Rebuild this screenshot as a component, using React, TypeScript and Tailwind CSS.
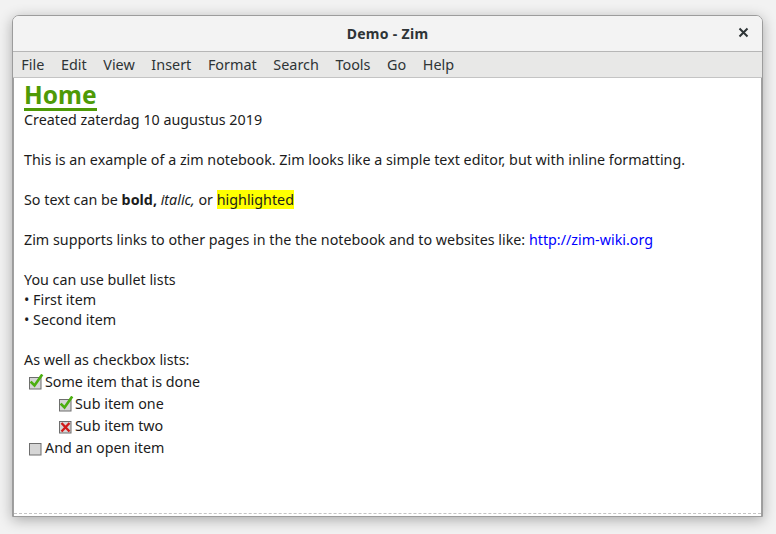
import React from 'react';

const MENU = ['File', 'Edit', 'View', 'Insert', 'Format', 'Search', 'Tools', 'Go', 'Help'];

type BoxState = 'done' | 'cross' | 'open';

// Checkbox icon as drawn by Zim's GTK theme
function CheckIcon({ state }: { state: BoxState }) {
  return (
    <svg width="16" height="16" viewBox="0 0 16 16" className="shrink-0">
      <rect x="1.5" y="3.5" width="11.5" height="11.5" fill="#d6d6d6" stroke="#6e6e6e" />
      {state === 'done' && (
        <path d="M3.5 8.5 L6.5 11.5 L13.5 1.5" fill="none" stroke="#4caf10" strokeWidth="2.6" strokeLinecap="square" />
      )}
      {state === 'cross' && (
        <path d="M3.5 5 L11.5 13.5 M11.5 5 L3.5 13.5" fill="none" stroke="#d11a1a" strokeWidth="2.4" />
      )}
    </svg>
  );
}

function CheckItem({ state, indent, children }: { state: BoxState; indent?: boolean; children: React.ReactNode }) {
  return (
    <div className={`flex items-center h-[22px] gap-[1px] ${indent ? 'pl-[34px]' : 'pl-[4px]'}`}>
      <CheckIcon state={state} />
      <span>{children}</span>
    </div>
  );
}

export default function App() {
  return (
    <div
      className="w-[776px] h-[534px] bg-[#f2f2f2] pt-[15px] pl-[12px]"
      style={{ fontFamily: "'Noto Sans', 'Open Sans', sans-serif" }}
    >
      <div className="w-[751px] h-[502px] flex flex-col rounded-t-[7px] border border-[#9c9c9c] shadow-[0_3px_14px_rgba(0,0,0,0.3)] overflow-hidden bg-white">
        {/* Title bar */}
        <div className="relative h-[36px] shrink-0 bg-[#f3f3f3] flex items-center justify-center border-b border-[#b6b6b6]">
          <span className="text-[14px] font-bold text-[#2e3436] tracking-[0.3px]">Demo - Zim</span>
          <span className="absolute right-[13px] top-[11px] text-[#2e3436]">
            <svg width="11" height="11" viewBox="0 0 11 11">
              <path d="M1.5 1.5 L9.5 9.5 M9.5 1.5 L1.5 9.5" stroke="#2e3436" strokeWidth="2" />
            </svg>
          </span>
        </div>

        {/* Menu bar */}
        <div className="h-[26px] shrink-0 bg-[#e8e8e7] border-b border-[#c4c4c4] flex items-center text-[14.4px] text-[#2e3436]">
          {MENU.map((m) => (
            <span key={m} className="px-[8.3px] leading-[30px]">{m}</span>
          ))}
        </div>

        {/* Page */}
        <div className="flex-1 flex flex-col border-x border-[#a0a0a0]">
          <div className="flex-1 pl-[10px] pt-[3px] text-[14.3px] text-[#1c1c1c] leading-[20px]">
            <div className="h-[29px] flex items-start">
              <span className="text-[24.5px] font-bold text-[#4e9a06] leading-[27px] border-b-[3px] border-[#4e9a06]">
                Home
              </span>
            </div>
            <div>Created zaterdag 10 augustus 2019</div>
            <div className="h-[20px]" />
            <div>This is an example of a zim notebook. Zim looks like a simple text editor, but with inline formatting.</div>
            <div className="h-[20px]" />
            <div>
              So text can be <b>bold,</b> <i>italic,</i> or <span className="bg-[#ffff00]">highlighted</span>
            </div>
            <div className="h-[20px]" />
            <div>
              Zim supports links to other pages in the the notebook and to websites like:{' '}
              <span className="text-[#0000ff]">http://zim-wiki.org</span>
            </div>
            <div className="h-[20px]" />
            <div>You can use bullet lists</div>
            <div>• First item</div>
            <div>• Second item</div>
            <div className="h-[20px]" />
            <div>As well as checkbox lists:</div>
            <div className="pt-[1px]">
              <CheckItem state="done">Some item that is done</CheckItem>
              <CheckItem state="done" indent>Sub item one</CheckItem>
              <CheckItem state="cross" indent>Sub item two</CheckItem>
              <CheckItem state="open">And an open item</CheckItem>
            </div>
          </div>
          <div className="h-[3px] border-t border-dashed border-[#c4c4c4]" />
        </div>
      </div>
    </div>
  );
}
